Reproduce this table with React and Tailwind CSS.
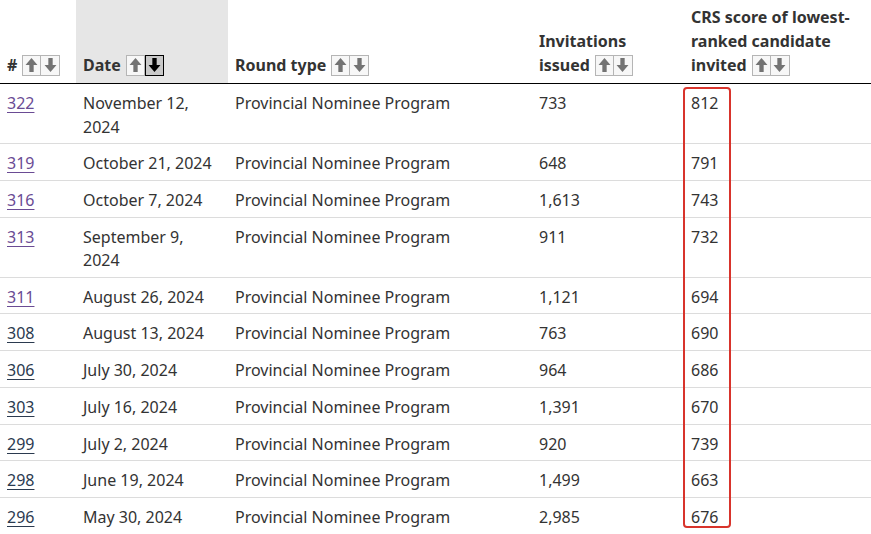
const rows = [
  { id: "322", date: "November 12, 2024", type: "Provincial Nominee Program", inv: "733", crs: "812", visited: true },
  { id: "319", date: "October 21, 2024", type: "Provincial Nominee Program", inv: "648", crs: "791", visited: true },
  { id: "316", date: "October 7, 2024", type: "Provincial Nominee Program", inv: "1,613", crs: "743", visited: true },
  { id: "313", date: "September 9, 2024", type: "Provincial Nominee Program", inv: "911", crs: "732", visited: true },
  { id: "311", date: "August 26, 2024", type: "Provincial Nominee Program", inv: "1,121", crs: "694", visited: true },
  { id: "308", date: "August 13, 2024", type: "Provincial Nominee Program", inv: "763", crs: "690" },
  { id: "306", date: "July 30, 2024", type: "Provincial Nominee Program", inv: "964", crs: "686" },
  { id: "303", date: "July 16, 2024", type: "Provincial Nominee Program", inv: "1,391", crs: "670" },
  { id: "299", date: "July 2, 2024", type: "Provincial Nominee Program", inv: "920", crs: "739" },
  { id: "298", date: "June 19, 2024", type: "Provincial Nominee Program", inv: "1,499", crs: "663" },
  { id: "296", date: "May 30, 2024", type: "Provincial Nominee Program", inv: "2,985", crs: "676" },
];

const Arrow = ({ down }) => (
  <svg viewBox="0 0 12 14" className={"w-[13px] h-[16px] " + (down ? "rotate-180" : "")}>
    <path d="M6 0.5 L11.5 7 H8 V13.5 H4 V7 H0.5 Z" fill="currentColor" />
  </svg>
);

const SortButtons = ({ active }) => (
  <span className="inline-flex align-middle ml-[5px] -mt-[3px]">
    <span className="w-[19px] h-[21px] flex items-center justify-center border border-[#b5b5b5] bg-[#f7f7f7] text-[#737373]">
      <Arrow />
    </span>
    {active ? (
      <span className="w-[19px] h-[21px] flex items-center justify-center border-[1.5px] border-black bg-[#c9c9c9] text-black">
        <Arrow down />
      </span>
    ) : (
      <span className="w-[19px] h-[21px] flex items-center justify-center border border-l-0 border-[#b5b5b5] bg-[#f7f7f7] text-[#737373]">
        <Arrow down />
      </span>
    )}
  </span>
);

const App = () => {
  return (
    <section className="relative w-[871px] h-[534px] overflow-hidden bg-white text-[#333] font-['Noto_Sans',sans-serif] text-[16px]">
      <table className="w-full table-fixed border-collapse">
        <colgroup>
          <col className="w-[76px]" />
          <col className="w-[152px]" />
          <col className="w-[304px]" />
          <col className="w-[152px]" />
          <col />
        </colgroup>
        <thead>
          <tr className="border-b-[1.5px] border-black font-bold leading-[24px] align-bottom">
            <th className="pl-[7px] pr-[4px] pt-[5px] pb-[6px] text-left">
              #<SortButtons />
            </th>
            <th className="pl-[7px] pr-[4px] pt-[5px] pb-[6px] text-left bg-[#e6e6e6]">
              Date<SortButtons active />
            </th>
            <th className="pl-[7px] pr-[4px] pt-[5px] pb-[6px] text-left">
              Round type<SortButtons />
            </th>
            <th className="pl-[7px] pr-[4px] pt-[5px] pb-[6px] text-left">
              Invitations issued<SortButtons />
            </th>
            <th className="pl-[7px] pr-[10px] pt-[5px] pb-[6px] text-left">
              CRS score of lowest-ranked candidate invited<SortButtons />
            </th>
          </tr>
        </thead>
        <tbody className="leading-[23.5px]">
          {rows.map((row) => (
            <tr key={row.id} className="border-b border-[#dcdcdc] align-top">
              <td className="pl-[7px] pt-[8px] pb-[4.2px]">
                <a
                  href="#"
                  className={"underline underline-offset-[3px] " + (row.visited ? "text-[#6a4b94]" : "text-[#2b3a4f]")}
                >
                  {row.id}
                </a>
              </td>
              <td className="pl-[7px] pr-[7px] pt-[8px] pb-[4.2px]">{row.date}</td>
              <td className="pl-[7px] pt-[8px] pb-[4.2px]">{row.type}</td>
              <td className="pl-[7px] pt-[8px] pb-[4.2px]">{row.inv}</td>
              <td className="pl-[7px] pt-[8px] pb-[4.2px]">{row.crs}</td>
            </tr>
          ))}
        </tbody>
      </table>
      <div className="absolute left-[683px] top-[87px] w-[48px] h-[441px] border-[2.5px] border-[#d8342c] rounded-[4px]" />
    </section>
  );
};

export default App;
